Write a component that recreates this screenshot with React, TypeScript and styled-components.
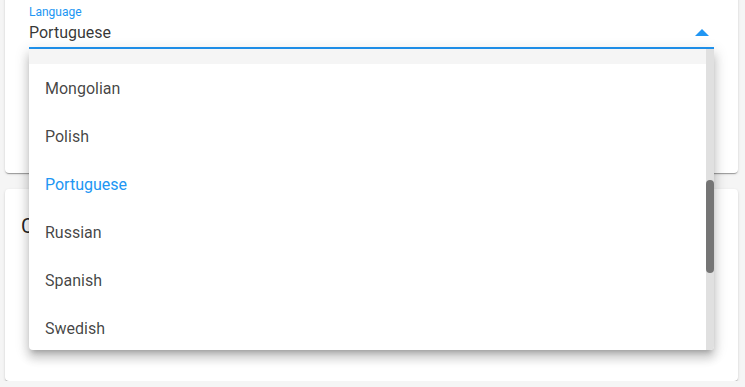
import * as React from "react";
import styled, { createGlobalStyle } from "styled-components";

const blue = "#2196f3";

const languages = [
  "Arabic",
  "Chinese",
  "English",
  "French",
  "German",
  "Hindi",
  "Italian",
  "Japanese",
  "Korean",
  "Mongolian",
  "Polish",
  "Portuguese",
  "Russian",
  "Spanish",
  "Swedish",
  "Thai",
  "Turkish",
  "Ukrainian",
  "Urdu",
  "Vietnamese"
];

const itemHeight = 48;
const listPadding = 8;
const menuHeight = 301;
const scrollTop = listPadding + 9 * itemHeight - 15;

const GlobalStyle = createGlobalStyle`
  html, body {
    margin: 0;
    padding: 0;
    background: #f5f5f5;
    overflow: hidden;
  }

  body {
    font-family: Roboto, "Liberation Sans", Arial, sans-serif;
  }
`;

const Page = styled.div`
  display: flex;
  flex-direction: column;
  gap: 16px;
  width: 733px;
  margin-top: -20px;
  padding-left: 5px;
`;

const Card = styled.div<{ $height: number }>`
  box-sizing: border-box;
  height: ${p => p.$height}px;
  background: #fff;
  border-radius: 4px;
  box-shadow: 0 2px 1px -1px rgba(0, 0, 0, 0.2), 0 1px 1px 0 rgba(0, 0, 0, 0.14),
    0 1px 3px 0 rgba(0, 0, 0, 0.12);
`;

const SettingsCard = styled(Card)`
  padding: 26px 24px 0;
`;

const SectionCard = styled(Card)`
  padding: 21px 16px 0;
`;

const Title = styled.div`
  font-size: 20px;
  line-height: 32px;
  font-weight: 400;
  color: rgba(0, 0, 0, 0.87);
`;

const Field = styled.div`
  position: relative;
`;

const Label = styled.label`
  display: block;
  font-size: 12px;
  line-height: 12px;
  color: ${blue};
`;

const SelectBox = styled.div`
  display: flex;
  align-items: center;
  padding: 5px 0;
  border-bottom: 2px solid ${blue};
  font-size: 16px;
  line-height: 19px;
  color: rgba(0, 0, 0, 0.8);
`;

const Value = styled.span`
  flex: 1;
`;

const Arrow = styled.svg`
  width: 14px;
  height: 7px;
  margin-right: 5px;
  fill: ${blue};
`;

const Menu = styled.div`
  position: absolute;
  top: 100%;
  left: 0;
  right: 0;
  z-index: 10;
  display: flex;
  height: ${menuHeight}px;
  background: #fff;
  border-radius: 0 0 4px 4px;
  overflow: hidden;
  box-shadow: 0 5px 5px -3px rgba(0, 0, 0, 0.2), 0 8px 10px 1px rgba(0, 0, 0, 0.14),
    0 3px 14px 2px rgba(0, 0, 0, 0.12);
`;

const Viewport = styled.ul`
  flex: 1;
  margin: 0;
  padding: ${listPadding}px 0;
  list-style: none;
  overflow: hidden;
`;

const Track = styled.div`
  width: 8px;
  background: #e0e0e0;
`;

const Thumb = styled.div`
  width: 8px;
  background: #757575;
  border-radius: 4px;
`;

const Item = styled.li<{ $selected?: boolean; $hover?: boolean }>`
  display: flex;
  align-items: center;
  height: ${itemHeight}px;
  padding: 0 16px;
  font-size: 16px;
  color: ${p => (p.$selected ? blue : "rgba(0, 0, 0, 0.74)")};
  background: ${p => (p.$hover ? "#f5f5f5" : "transparent")};
`;

export default function App() {
  const list = React.useRef<HTMLUListElement>(null);
  const value = "Portuguese";

  const contentHeight = languages.length * itemHeight + listPadding * 2;
  const thumbHeight = (menuHeight * menuHeight) / contentHeight;
  const thumbTop =
    (scrollTop / (contentHeight - menuHeight)) * (menuHeight - thumbHeight);

  React.useLayoutEffect(() => {
    if (list.current) {
      list.current.scrollTop = scrollTop;
    }
  }, []);

  return (
    <>
      <GlobalStyle />
      <Page>
        <SettingsCard $height={193}>
          <Field>
            <Label>Language</Label>
            <SelectBox>
              <Value>{value}</Value>
              <Arrow viewBox="0 0 14 7">
                <path d="M0 7L7 0l7 7z" />
              </Arrow>
            </SelectBox>
            <Menu>
              <Viewport ref={list}>
                {languages.map(lang => (
                  <Item
                    key={lang}
                    $selected={lang === value}
                    $hover={lang === "Korean"}
                  >
                    {lang}
                  </Item>
                ))}
              </Viewport>
              <Track>
                <Thumb style={{ marginTop: thumbTop, height: thumbHeight }} />
              </Track>
            </Menu>
          </Field>
        </SettingsCard>
        <SectionCard $height={192}>
          <Title>Currency</Title>
        </SectionCard>
      </Page>
    </>
  );
}
